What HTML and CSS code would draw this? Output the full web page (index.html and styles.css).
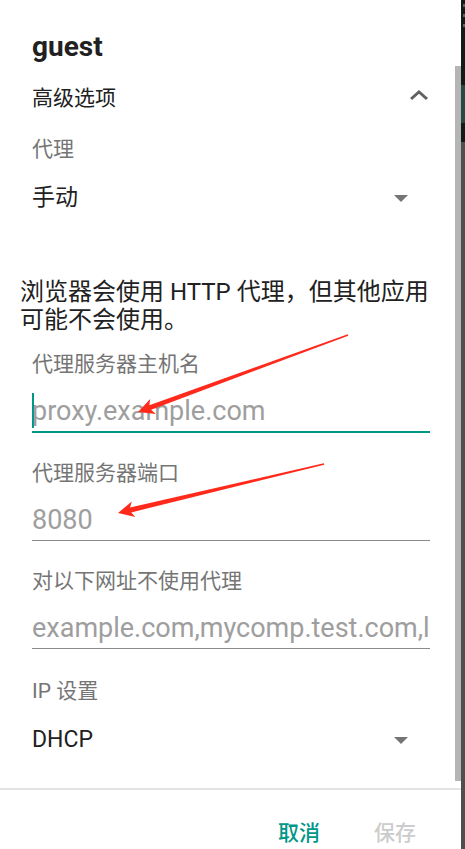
FILE: index.html
```html
<!DOCTYPE html>
<html lang="zh-CN">
<head>
<meta charset="utf-8">
<title>guest</title>
<link rel="stylesheet" href="styles.css">
</head>
<body>
<div class="screen">
  <div class="dialog">
    <div class="scroll">
      <div class="content">
        <h1 class="title">guest</h1>
        <div class="expander">
          <span>高级选项</span>
          <svg class="chevron" viewBox="6 8 12 7.41" preserveAspectRatio="none"><path d="M12 8l-6 6 1.41 1.41L12 10.83l4.59 4.58L18 14z"/></svg>
        </div>
        <div class="label">代理</div>
        <div class="spinner"><span>手动</span><span class="caret"></span></div>
        <p class="note">浏览器会使用 HTTP 代理，但其他应用可能不会使用。</p>
        <div class="label after-note">代理服务器主机名</div>
        <div class="field focused"><span class="cursor"></span><span class="hint">proxy.example.com</span></div>
        <div class="label after-field">代理服务器端口</div>
        <div class="field"><span class="hint">8080</span></div>
        <div class="label after-field">对以下网址不使用代理</div>
        <div class="field"><span class="hint">example.com,mycomp.test.com,localhost</span></div>
        <div class="label section">IP 设置</div>
        <div class="spinner"><span>DHCP</span><span class="caret"></span></div>
      </div>
      <div class="scrollbar"><div class="thumb"></div></div>
    </div>
    <div class="actions">
      <button class="btn primary">取消</button>
      <button class="btn disabled">保存</button>
    </div>
  </div>
  <div class="backdrop">
    <div class="backdrop-top">
      <span class="dot"></span><span class="dot"></span><span class="dot"></span>
      <span class="patch"></span>
    </div>
    <div class="backdrop-rest"></div>
  </div>
  <svg class="annotations" width="465" height="849" viewBox="0 0 465 849">
    <polygon points="138,412 150.2,399 149.3,405.2 347.8,334.3 348.2,335.7 151.1,409.8 155.8,414"/>
    <polygon points="118,513 131.8,501.5 130,507.6 323.8,463.3 324.2,464.7 131.2,512.4 135.4,517.1"/>
  </svg>
</div>
</body>
</html>
```

FILE: styles.css
```css
* { box-sizing: border-box; }

html, body {
  margin: 0;
  padding: 0;
  background: #ffffff;
}

body {
  font-family: Roboto, "Noto Sans CJK SC", sans-serif;
  color: #212121;
}

.screen {
  position: relative;
  width: 465px;
  height: 849px;
  display: flex;
  overflow: hidden;
}

.dialog {
  width: 461px;
  height: 849px;
  display: flex;
  flex-direction: column;
  background: #ffffff;
}

.scroll {
  flex: 1;
  display: flex;
  min-height: 0;
}

.content {
  flex: 1;
  padding: 30px 25px 0 32px;
  min-width: 0;
}

.title {
  margin: 0;
  height: 34px;
  line-height: 34px;
  font-size: 28px;
  font-weight: 700;
  color: #212121;
}

.expander {
  margin-top: 10px;
  height: 48px;
  line-height: 48px;
  font-size: 21px;
  display: flex;
  justify-content: space-between;
  align-items: flex-start;
}

.chevron {
  width: 18px;
  height: 10px;
  margin-top: 16px;
  margin-right: 2px;
  fill: #616161;
}

.label {
  margin-top: 7px;
  height: 40px;
  line-height: 40px;
  font-size: 21px;
  color: #757575;
  white-space: nowrap;
}

.label.after-note { margin-top: 10px; }
.label.after-field { margin-top: 20px; }
.label.section { margin-top: 22px; }

.spinner {
  margin-top: 7px;
  height: 44px;
  line-height: 44px;
  font-size: 23px;
  color: #212121;
  display: flex;
  justify-content: space-between;
  align-items: center;
}

.caret {
  width: 0;
  height: 0;
  border-left: 7px solid transparent;
  border-right: 7px solid transparent;
  border-top: 7px solid #757575;
  margin-right: 22px;
}

.note {
  margin: 58px -6px 0 -12px;
  font-size: 24px;
  line-height: 28px;
  color: #212121;
}

.field {
  height: 48px;
  padding-top: 6px;
  display: flex;
  align-items: center;
  border-bottom: 1px solid #8a8a8a;
  overflow: hidden;
}

.field.focused {
  height: 49px;
  border-bottom: 2px solid #009688;
}

.cursor {
  flex: none;
  width: 2px;
  height: 35px;
  margin-right: -2px;
  background: #009688;
}

.hint {
  font-size: 27px;
  line-height: 30px;
  color: #9e9e9e;
  white-space: nowrap;
}

.scrollbar {
  width: 6px;
  flex: none;
}

.thumb {
  margin-top: 66px;
  height: 715px;
  background: #b5b5b5;
}

.actions {
  height: 61px;
  flex: none;
  border-top: 2px solid #e3e3e3;
  padding: 31px 45px 0 0;
  display: flex;
  justify-content: flex-end;
  align-items: flex-start;
  gap: 54px;
}

.btn {
  border: 0;
  background: none;
  padding: 0;
  margin: 0;
  font-family: Roboto, "Noto Sans CJK SC", sans-serif;
  font-size: 21px;
  line-height: 24px;
  font-weight: 500;
}

.btn.primary { color: #009688; }
.btn.disabled { color: #cccccc; }

.backdrop {
  width: 4px;
  flex: none;
  display: flex;
  flex-direction: column;
}

.backdrop-top {
  height: 142px;
  background: #121a1a;
  display: flex;
  flex-direction: column;
  align-items: flex-end;
  padding-top: 4px;
}

.dot {
  width: 2px;
  height: 3px;
  margin-bottom: 7px;
  background: #5e6464;
}

.patch {
  align-self: stretch;
  margin-top: 51px;
  height: 38px;
  background: #274843;
}

.backdrop-rest {
  flex: 1;
  background: #4f4f4f;
}

.annotations {
  position: absolute;
  top: 0;
  left: 0;
  pointer-events: none;
}

.annotations polygon {
  fill: #ff2a1c;
}
```
